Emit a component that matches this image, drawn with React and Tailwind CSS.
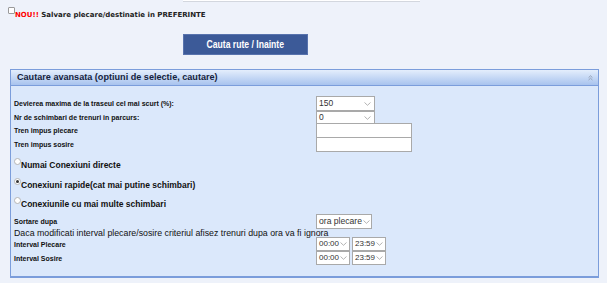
import React from "react";

const Chevron = () => (
  <svg width="7" height="4" viewBox="0 0 7 4" className="shrink-0">
    <path d="M0.5 0.5 L3.5 3.3 L6.5 0.5" fill="none" stroke="#a0a0a0" strokeWidth="0.8" />
  </svg>
);

function Select({ className, value }) {
  return (
    <div
      className={
        "flex items-center justify-between gap-[1px] bg-white border border-[#a9a9a9] pl-[2px] pr-[3px] leading-none text-[#333] whitespace-nowrap overflow-hidden font-['Liberation_Sans',sans-serif] " +
        className
      }
    >
      <span>{value}</span>
      <Chevron />
    </div>
  );
}

function Radio({ checked }) {
  return (
    <div className="w-[7px] h-[7px] rounded-full border border-[#b5b5b5] bg-white flex items-center justify-center shrink-0">
      {checked ? <div className="w-[3px] h-[3px] rounded-full bg-[#333]" /> : null}
    </div>
  );
}

const label =
  "text-[7px] leading-none font-bold text-[#111] whitespace-nowrap font-['Liberation_Sans',sans-serif]";

export default function App() {
  return (
    <div className="w-[607px] h-[283px] overflow-hidden bg-[#eef2fa] flex flex-col font-['Liberation_Sans',sans-serif]">
      <div className="ml-[183px] w-[237px] h-[2px] bg-white border-b border-[#d3d7de]" />

      <div className="mt-[5px] pl-[8px] flex items-start">
        <div className="w-[7px] h-[7px] border border-[#9a9a9a] bg-white rounded-[1px] shrink-0" />
        <div className="mt-[4px] text-[7px] leading-[8px] font-bold font-['DejaVu_Sans',sans-serif] text-[#222] whitespace-nowrap">
          <span className="text-[#ff0000]">NOU!!</span> Salvare plecare/destinatie in PREFERINTE
        </div>
      </div>

      <div className="mt-[15px] ml-[183px] w-[125px] h-[21px] bg-[#3c5a98] border border-[#5873ad] flex items-center justify-center">
        <span className="inline-block text-white font-bold text-[10.5px] leading-none scale-x-[0.82] whitespace-nowrap">
          Cauta rute / Inainte
        </span>
      </div>

      <div className="mt-[14px] ml-[10px] w-[589px] h-[209px] border border-[#7b9ddb] border-b-2 bg-[#dbe8fb] flex flex-col">
        <div className="h-[16px] shrink-0 border-b border-[#7b9ddb] bg-gradient-to-b from-[#e4eefc] to-[#a8c3ee] flex items-center justify-between pl-[6px] pr-[5px]">
          <span className="text-[9.1px] font-bold text-[#15233d] leading-none">
            Cautare avansata (optiuni de selectie, cautare)
          </span>
          <svg width="5" height="6" viewBox="0 0 5 6">
            <path d="M0.6 2.6 L2.5 0.8 L4.4 2.6 M0.6 5 L2.5 3.2 L4.4 5" fill="none" stroke="#8a96a8" strokeWidth="0.8" />
          </svg>
        </div>

        <div className="pt-[10px] pl-[3px] flex flex-col">
          <div className="flex items-center h-[15px]">
            <div className={label + " w-[302px]"}>Devierea maxima de la traseul cel mai scurt (%):</div>
            <Select className="w-[59px] h-[15px] text-[8.5px]" value="150" />
          </div>
          <div className="flex items-center h-[13px]">
            <div className={label + " w-[302px]"}>Nr de schimbari de trenuri in parcurs:</div>
            <Select className="w-[59px] h-[13px] text-[8.5px]" value="0" />
          </div>
          <div className="flex items-center h-[15px] -mt-[1px]">
            <div className={label + " w-[302px]"}>Tren impus plecare</div>
            <div className="w-[96px] h-[15px] bg-white border border-[#a9a9a9]" />
          </div>
          <div className="flex items-center h-[15px] -mt-[1px]">
            <div className={label + " w-[302px]"}>Tren impus sosire</div>
            <div className="w-[96px] h-[15px] bg-white border border-[#a9a9a9]" />
          </div>

          <div className="mt-[6px] flex items-start h-[20px]">
            <Radio />
            <span className="mt-[2px] text-[8.5px] leading-[10px] font-bold text-[#111]">Numai Conexiuni directe</span>
          </div>
          <div className="flex items-start h-[19px]">
            <Radio checked />
            <span className="mt-[2px] text-[8.5px] leading-[10px] font-bold text-[#111]">
              Conexiuni rapide(cat mai putine schimbari)
            </span>
          </div>
          <div className="flex items-start h-[17px]">
            <Radio />
            <span className="mt-[2px] text-[8.5px] leading-[10px] font-bold text-[#111]">
              Conexiunile cu mai multe schimbari
            </span>
          </div>

          <div className="flex items-center h-[15px]">
            <div className={label + " w-[302px]"}>Sortare dupa</div>
            <Select className="w-[56px] h-[15px] text-[8.6px]" value="ora plecare" />
          </div>
          <div className="h-[8px] text-[8.8px] leading-[8px] text-[#111] whitespace-nowrap">
            Daca modificati interval plecare/sosire criteriul afisez trenuri dupa ora va fi ignora
          </div>
          <div className="flex items-center h-[14px]">
            <div className={label + " w-[302px]"}>Interval Plecare</div>
            <Select className="w-[34px] h-[14px] text-[8px]" value="00:00" />
            <Select className="ml-[2px] w-[34px] h-[14px] text-[8px]" value="23:59" />
          </div>
          <div className="flex items-center h-[14px]">
            <div className={label + " w-[302px]"}>Interval Sosire</div>
            <Select className="w-[34px] h-[14px] text-[8px]" value="00:00" />
            <Select className="ml-[2px] w-[34px] h-[14px] text-[8px]" value="23:59" />
          </div>
        </div>
      </div>
    </div>
  );
}
